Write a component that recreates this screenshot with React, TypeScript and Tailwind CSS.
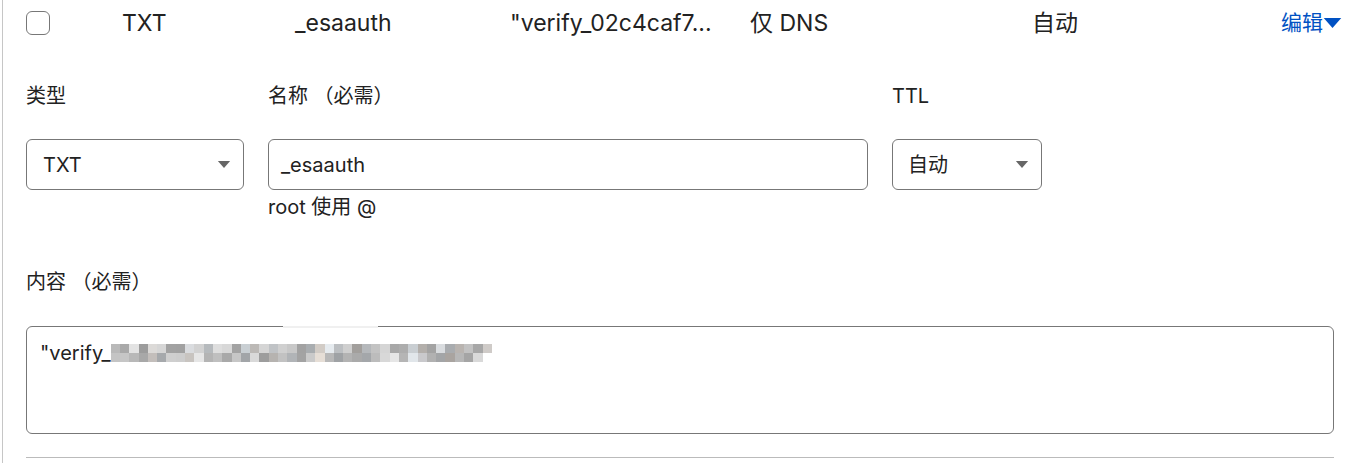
const mosaic = [
  ['#b9b9b9', '#a9a9a9', '#e3e3e3', '#9c9c9c', '#dcdad8', '#d6d6d6', '#a2a2a2', '#a1a1a1', '#dadcdf', '#d2d2d2', '#b6babd', '#dedede', '#d8d8d8', '#a3a3a3', '#c9cfd3', '#bcb9b6', '#d5d5d5', '#c0c3c6', '#d0d0d0', '#c8c8c8', '#a2a2a2', '#a9adb0', '#d2ccc6', '#e6ebef', '#bcbfc2', '#cfcfcf', '#a29f9c', '#b5b8bb', '#c3c3c3', '#d5d5d5', '#a8a8a8', '#adadad', '#c9ced2', '#b3afab', '#a3a3a3', '#d9dcdf', '#a9acaf', '#b9b4b0', '#c2c2c2', '#a7a7a7', '#cfcbc8'],
  ['#c4c4c4', '#c6c6c6', '#b8b8b8', '#a8a8a8', '#c3bebb', '#a6a9ac', '#cfcfcf', '#cdcdcd', '#c8c4c0', '#e6e6e6', '#b4b4b4', '#bfbfbf', '#a9a9a9', '#c6c6c6', '#a2a5a8', '#d9d9d9', '#9d9d9d', '#b6b3b0', '#c2c2c2', '#b1b4b7', '#a3a3a3', '#cacaca', '#e6ded6', '#b8b8b8', '#9fa2a5', '#b3b3b3', '#aaaaaa', '#a4a7aa', '#bcbcbc', '#d8d8d8', '#e6e6e6', '#b5b5b5', '#e1e6ea', '#c9c9cc', '#b1b1b1', '#a3a5a7', '#a9a4a0', '#b7b7b7', '#a5a5a5', '#d9d9d9', '#ffffff'],
]

function Caret({ className }: { className: string }) {
  return (
    <svg viewBox="0 0 14 8" className={className}>
      <path d="M0 0h14L7 8z" fill="currentColor" />
    </svg>
  )
}

export default function App() {
  return (
    <div
      className="h-[463px] w-[1356px] overflow-hidden bg-white text-[#222]"
      style={{ fontFamily: 'Inter, "Noto Sans CJK SC", sans-serif' }}
    >
      <div className="ml-[2px] h-full border-l border-[#c6c6c6] pl-[23px] pr-[22px]">
        {/* Record row */}
        <div className="-mr-[8px] flex h-[46px] items-center text-[23px] leading-[30px]">
          <div className="h-[24px] w-[24px] rounded-[6px] border border-[#777]"></div>
          <span className="ml-[72px] w-[173px]">TXT</span>
          <span className="w-[215px]">_esaauth</span>
          <span className="w-[240px]">"verify_02c4caf7...</span>
          <span className="w-[282px]">仅 DNS</span>
          <span className="flex-1">自动</span>
          <a className="flex items-center text-[21px] text-[#0051c3]">
            编辑
            <Caret className="h-[10px] w-[19px]" />
          </a>
        </div>

        {/* Labels */}
        <div className="mt-[36px] flex text-[20px] leading-[28px]">
          <span className="w-[242px]">类型</span>
          <span className="w-[624px]">名称 （必需）</span>
          <span>TTL</span>
        </div>

        {/* Inputs */}
        <div className="mt-[29px] flex items-start gap-[24px] text-[20px] leading-[28px]">
          <div className="flex h-[51px] w-[218px] items-center justify-between rounded-[6px] border border-[#777] pl-[16px] pr-[12px]">
            <span>TXT</span>
            <Caret className="h-[7px] w-[14px] text-[#666]" />
          </div>
          <div className="flex flex-col">
            <div className="flex h-[51px] w-[600px] items-center rounded-[6px] border border-[#777] px-[12px]">
              <span>_esaauth</span>
            </div>
            <span className="mt-[3px] text-[20px]">root 使用 @</span>
          </div>
          <div className="flex h-[51px] w-[150px] items-center justify-between rounded-[6px] border border-[#777] pl-[15px] pr-[12px]">
            <span>自动</span>
            <Caret className="h-[7px] w-[14px] text-[#666]" />
          </div>
        </div>

        {/* Content */}
        <div className="mt-[47px] text-[20px] leading-[28px]">内容 （必需）</div>
        <div className="relative mt-[30px] h-[108px] rounded-[6px] border border-[#777] px-[13px] pt-[12px] text-[20px] leading-[28px]">
          <div className="absolute -top-px left-[256px] h-[2px] w-[95px] bg-[#f0f0f0]"></div>
          <div className="flex items-center">
            <span>"verify_</span>
            <div className="flex flex-col">
              {mosaic.map((row, r) => (
                <div key={r} className="flex">
                  {row.map((c, i) => (
                    <div key={i} className="h-[9px] w-[9.3px]" style={{ backgroundColor: c }}></div>
                  ))}
                </div>
              ))}
            </div>
          </div>
        </div>
        <div className="mt-[23px] h-px bg-[#bbb]"></div>
      </div>
    </div>
  )
}
